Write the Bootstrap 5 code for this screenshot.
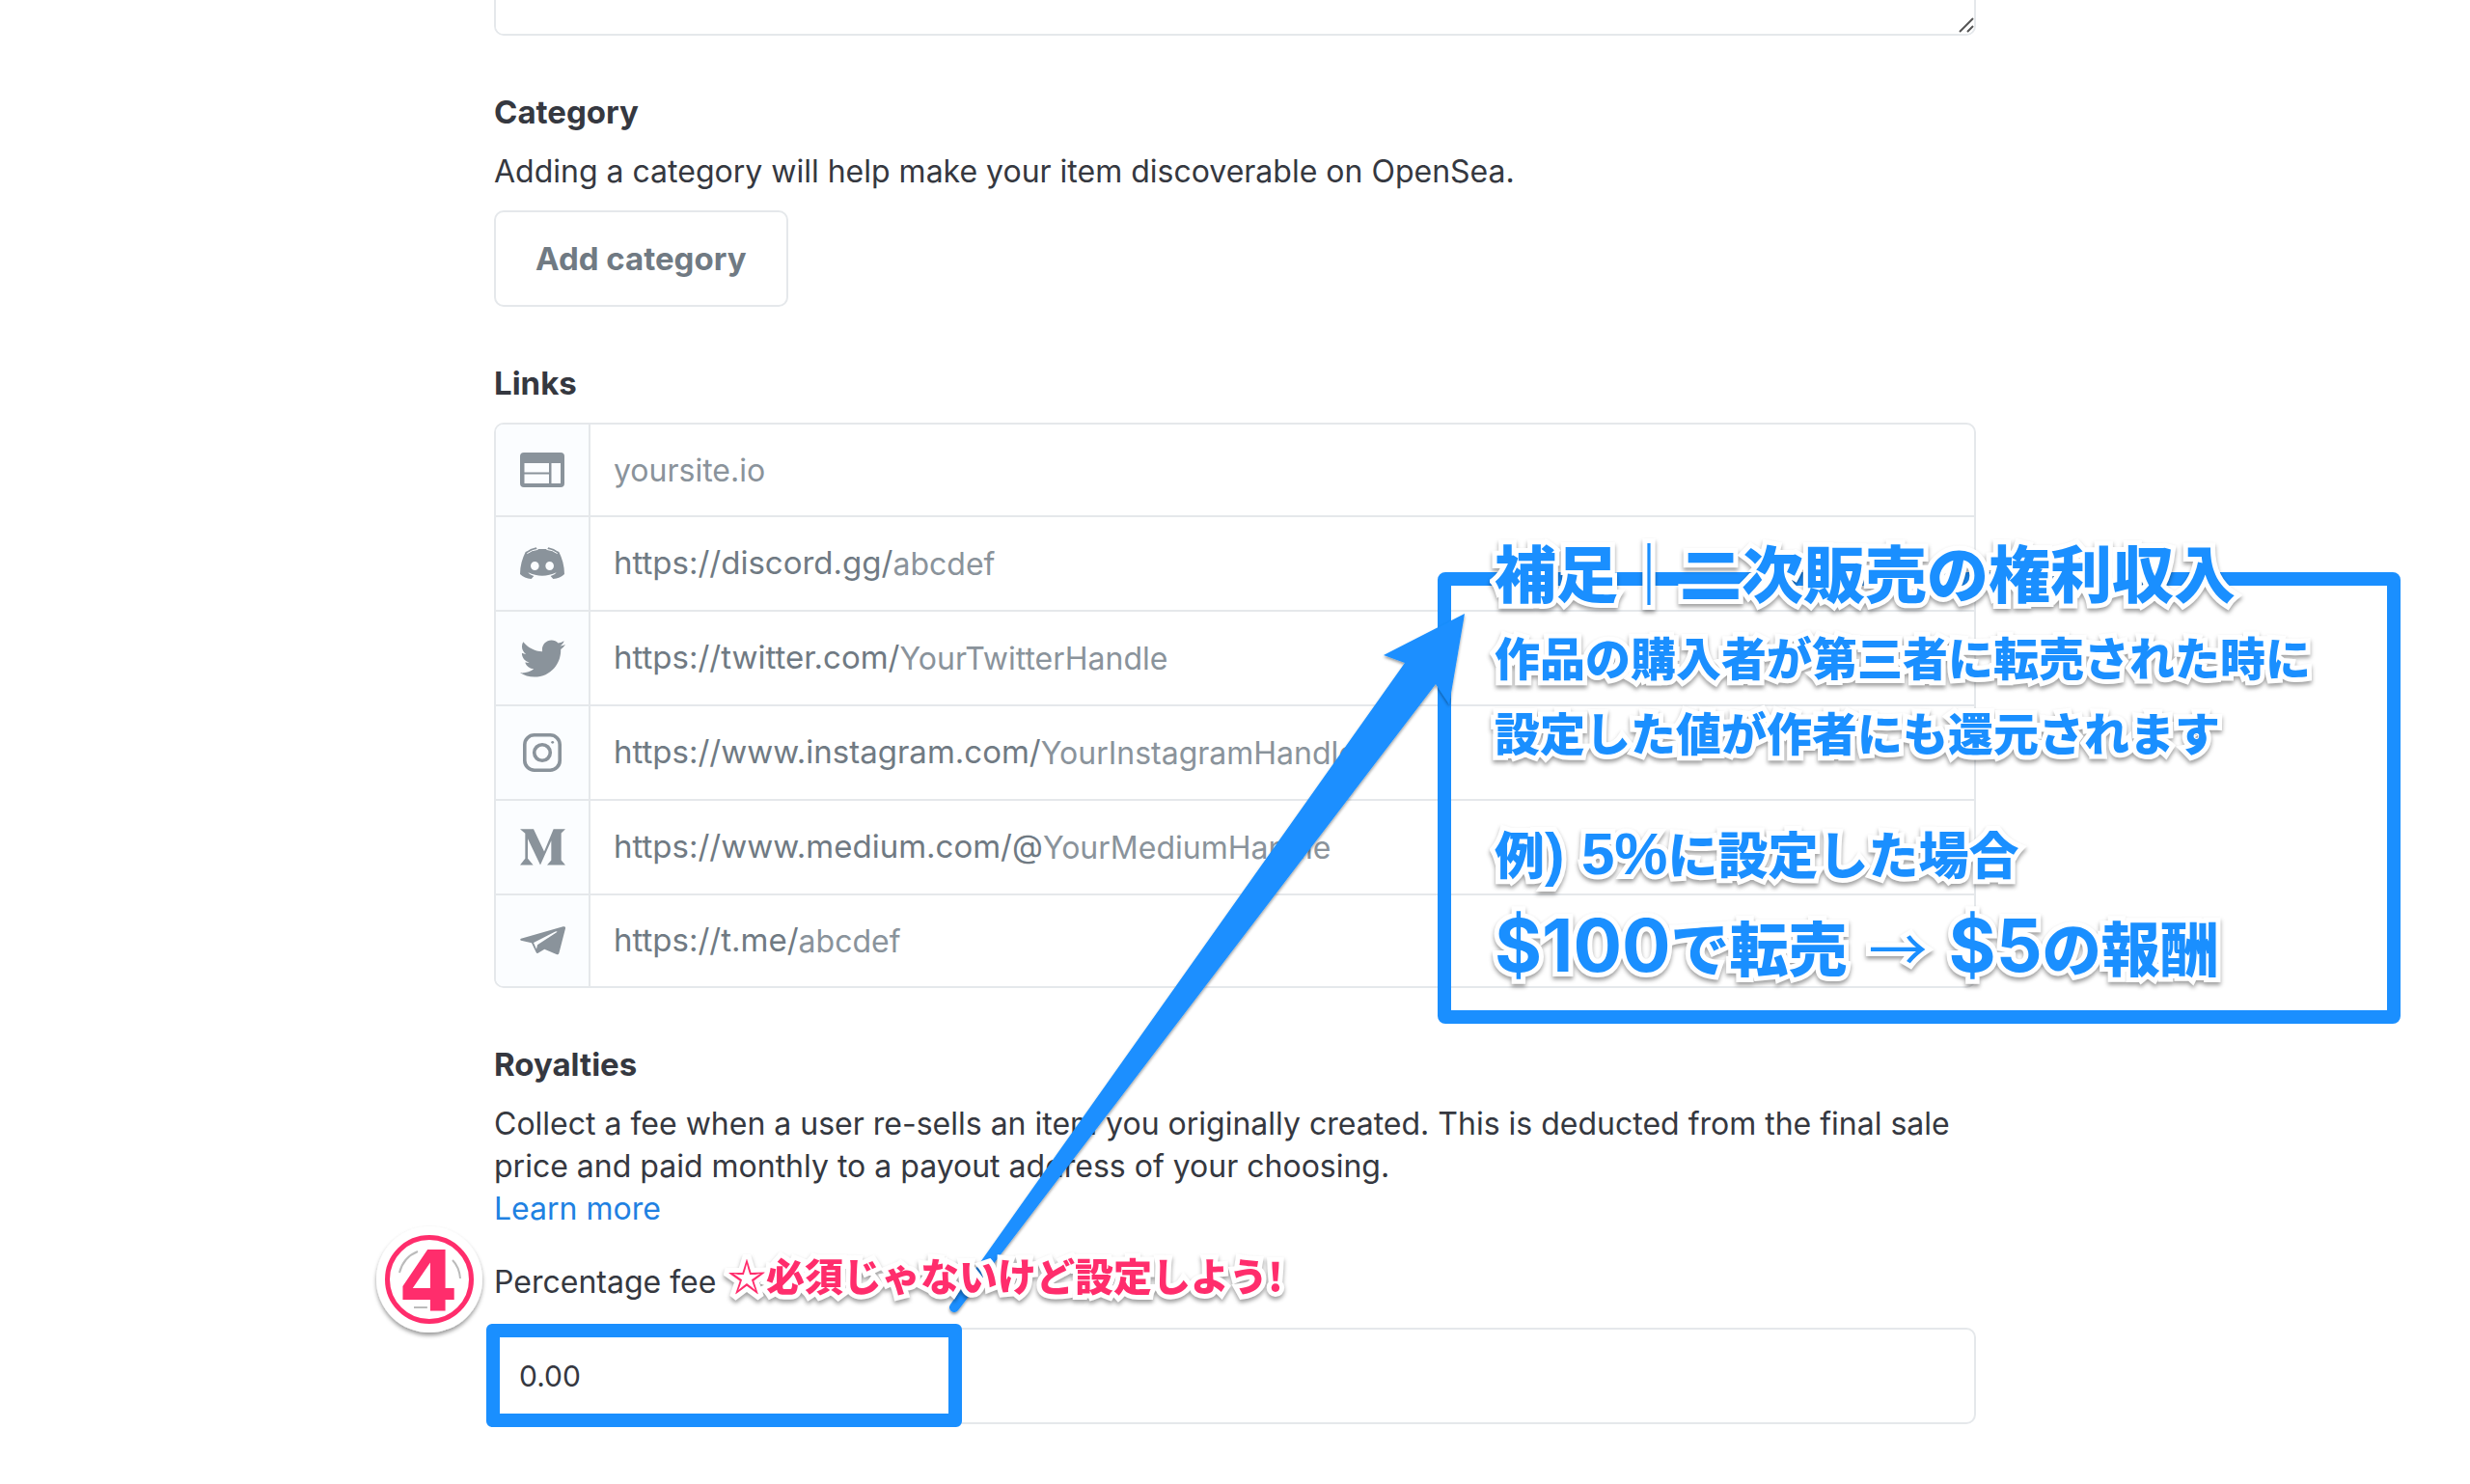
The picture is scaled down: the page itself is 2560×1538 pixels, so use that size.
<!DOCTYPE html>
<html lang="en">
<head>
<meta charset="utf-8">
<meta name="viewport" content="width=device-width, initial-scale=1">
<title>Create item</title>
<link href="https://cdn.jsdelivr.net/npm/bootstrap@5.3.0/dist/css/bootstrap.min.css" rel="stylesheet">
<script src="https://cdn.jsdelivr.net/npm/bootstrap@5.3.0/dist/js/bootstrap.bundle.min.js" defer></script>
<style>
  :root { --ink: #353840; --line: #e5e8eb; --muted: #707a83; --soft: #8a939b; --note: #1a8fff; --pink: #ff2d6c; }
  body { font-family: Inter, "Noto Sans CJK JP", sans-serif; font-size: 32px; line-height: 44px; color: var(--ink); background: #fff; overflow-x: hidden; }
  .item-form { max-width: 1536px; padding-bottom: 60px; }
  .desc-box { height: 37px; resize: none; border: 2px solid var(--line); border-top: 0; border-radius: 0 0 10px 10px; padding: 0 24px; }
  .grip { right: 2px; bottom: 3px; }
  .form-part { padding-top: 57px; }
  .part-title { font-size: 33px; line-height: 44px; font-weight: 700; margin: 0 0 18px; }
  .btn-add { --bs-btn-color: var(--muted); --bs-btn-border-color: var(--line); --bs-btn-bg: #fff; --bs-btn-hover-color: var(--ink); --bs-btn-hover-border-color: var(--soft);
    --bs-btn-border-width: 2px; --bs-btn-border-radius: 10px; --bs-btn-padding-x: 41px; --bs-btn-padding-y: 26px; --bs-btn-font-size: 33px; --bs-btn-font-weight: 700; --bs-btn-line-height: 44px; margin-top: 18px; }
  .link-list { border: 2px solid var(--line); border-radius: 10px; overflow: hidden; margin-top: 19px; }
  .link-row + .link-row { border-top: 2px solid var(--line); }
  .link-row { height: 98px; color: var(--muted); }
  .link-row:first-child { height: 94px; }
  .link-row:last-child { height: 96px; }
  .link-row span { font-size: 33px; padding-bottom: 2px; }
  .icon-cell { width: 98px; background: #fbfdff; border-right: 2px solid var(--line); color: var(--soft); }
  .bare-input { border: 0; padding: 2px 0 0; background: transparent; color: var(--ink); outline: 0; min-width: 0; }
  .bare-input::placeholder { color: var(--soft); opacity: 1; }
  .more-link { color: #2081e2; text-decoration: none; }
  .fee-input { height: 100px; border: 2px solid var(--line); border-radius: 10px; padding: 0 24px; font-size: 30px; color: var(--ink); }
  .fee-head { padding: 32px 0 25px; }
  .fee-frame { left: -8px; top: -4px; width: 493px; height: 107px; border: 14px solid var(--note); border-radius: 6px; pointer-events: none; }
  .outlined { -webkit-text-stroke: 10px #fff; paint-order: stroke fill; filter: drop-shadow(0 3px 2px rgba(0,0,0,.38)); font-family: "Noto Sans CJK JP", sans-serif; font-weight: 900; white-space: nowrap; }
  .fee-tip { left: 242px; top: 22px; color: var(--pink); font-size: 40px; line-height: 48px; z-index: 2; }
  .step-badge { left: -127px; top: -9px; overflow: visible; }
  .step-badge text { font-family: "DejaVu Sans", sans-serif; font-weight: 700; font-size: 88px; }
  .note-layer { left: 0; top: 0; overflow: visible; pointer-events: none; }
  .note-box { left: 978px; top: 593px; width: 998px; height: 468px; border: 14px solid var(--note); border-radius: 8px; }
  .note-text { left: 1037px; top: 543px; color: var(--note); }
  .note-text p { margin: 0; }
  .t-head { font-size: 64px; line-height: 96px; padding-bottom: 2px; }
  .t-body { font-size: 47px; line-height: 78px; }
  .t-case { font-size: 52px; line-height: 78px; padding-top: 48px; }
  .t-sum { font-size: 61px; line-height: 96px; padding-top: 10px; }
  .t-case .latin { font-family: "Liberation Sans", sans-serif; font-weight: 700; font-size: 62px; line-height: 1; }
  .t-sum .latin { font-family: Inter, sans-serif; font-weight: 700; font-size: 75px; line-height: 1; }
  .thin { font-weight: 400; }
</style>
</head>
<body>
<main class="item-form mx-auto position-relative">
  <form>
    <div class="position-relative">
      <textarea class="desc-box w-100 d-block" aria-label="Description"></textarea>
      <svg class="grip position-absolute" width="16" height="16" viewBox="0 0 16 16" stroke="#555" stroke-width="2" fill="none" aria-hidden="true"><path d="M1 15 15 1M9 15l6-6"/></svg>
    </div>

    <section class="form-part">
      <h2 class="part-title">Category</h2>
      <p class="mb-0">Adding a category will help make your item discoverable on OpenSea.</p>
      <button type="button" class="btn btn-add">Add category</button>
    </section>

    <section class="form-part">
      <h2 class="part-title mb-0">Links</h2>
      <div class="link-list">
        <div class="link-row d-flex">
          <label for="site" class="icon-cell d-flex flex-shrink-0 align-items-center justify-content-center" aria-label="Website">
            <svg width="48" height="48" viewBox="0 0 48 48" fill="currentColor"><path fill-rule="evenodd" d="M5 6h38a4 4 0 0 1 4 4v28a4 4 0 0 1-4 4H5a4 4 0 0 1-4-4V10a4 4 0 0 1 4-4zM5.500 17v9.500H31V17zM5.500 28.500V38H31v-9.500zM33.500 17v21H43V17z"/></svg>
          </label>
          <div class="d-flex flex-grow-1 align-items-center px-4"><input id="site" class="bare-input flex-grow-1" placeholder="yoursite.io"></div>
        </div>
        <div class="link-row d-flex">
          <label for="discord" class="icon-cell d-flex flex-shrink-0 align-items-center justify-content-center" aria-label="Discord">
            <svg width="46" height="34" viewBox="0 0 138 100" fill="currentColor"><path fill-rule="evenodd" d="M17 14C33 6 50 5 69 5s36 1 52 9c10 20 17 44 17 69-9 9-21 14-35 15l-8-9c8-2 14-6 18-11-29 14-59 14-88 0 4 5 10 9 18 11l-8 9C21 97 9 92 0 83 0 58 7 34 17 14zM46 44a13 13.500 0 1 0 0 27 13 13.500 0 0 0 0-27zm46 0a13 13.500 0 1 0 0 27 13 13.500 0 0 0 0-27z"/><path d="M18 15Q32 3 50 0l3 4M120 15Q106 3 88 0l-3 4"/><path d="M22 19Q36 8 56 6M116 19Q102 8 82 6" fill="none" stroke="#fbfdff" stroke-width="3"/></svg>
          </label>
          <div class="d-flex flex-grow-1 align-items-center px-4"><span>https://discord.gg/</span><input id="discord" class="bare-input flex-grow-1" placeholder="abcdef"></div>
        </div>
        <div class="link-row d-flex">
          <label for="twitter" class="icon-cell d-flex flex-shrink-0 align-items-center justify-content-center" aria-label="Twitter">
            <svg width="47" height="47" viewBox="0 0 512 512" fill="currentColor"><path d="M459.370 151.716c.325 4.548.325 9.097.325 13.645 0 138.720-105.583 298.558-298.558 298.558-59.452 0-114.680-17.219-161.137-47.106 8.447.974 16.568 1.299 25.340 1.299 49.055 0 94.213-16.568 130.274-44.832-46.132-.975-84.792-31.188-98.112-72.772 6.498.974 12.995 1.624 19.818 1.624 9.421 0 18.843-1.300 27.614-3.573-48.081-9.747-84.143-51.980-84.143-102.985v-1.299c13.969 7.797 30.214 12.670 47.431 13.319-28.264-18.843-46.781-51.005-46.781-87.391 0-19.492 5.197-37.360 14.294-52.954 51.655 63.675 129.300 105.258 216.365 109.807-1.624-7.797-2.599-15.918-2.599-24.040 0-57.828 46.782-104.934 104.934-104.934 30.213 0 57.502 12.670 76.670 33.137 23.715-4.548 46.456-13.320 66.599-25.340-7.798 24.366-24.366 44.833-46.132 57.827 21.117-2.273 41.584-8.122 60.426-16.243-14.292 20.791-32.161 39.308-52.628 54.253z"/></svg>
          </label>
          <div class="d-flex flex-grow-1 align-items-center px-4"><span>https://twitter.com/</span><input id="twitter" class="bare-input flex-grow-1" placeholder="YourTwitterHandle"></div>
        </div>
        <div class="link-row d-flex">
          <label for="instagram" class="icon-cell d-flex flex-shrink-0 align-items-center justify-content-center" aria-label="Instagram">
            <svg width="40" height="40" viewBox="0 0 40 40" fill="none" stroke="currentColor" stroke-width="3.600"><rect x="1.800" y="1.800" width="36.400" height="36.400" rx="10"/><circle cx="20" cy="20" r="8.300"/><circle cx="30.700" cy="9.300" r="1.400" fill="currentColor" stroke="none"/></svg>
          </label>
          <div class="d-flex flex-grow-1 align-items-center px-4"><span>https://www.instagram.com/</span><input id="instagram" class="bare-input flex-grow-1" placeholder="YourInstagramHandle"></div>
        </div>
        <div class="link-row d-flex">
          <label for="medium" class="icon-cell d-flex flex-shrink-0 align-items-center justify-content-center" aria-label="Medium">
            <svg width="47" height="38" viewBox="0 0 141 113" fill="currentColor"><path d="M0 0h42l33 70L104 0h37l-13 13v84l13 15H84l13-15V36l-34 76L24 30v62l17 20H0l16-20V14z"/></svg>
          </label>
          <div class="d-flex flex-grow-1 align-items-center px-4"><span>https://www.medium.com/@</span><input id="medium" class="bare-input flex-grow-1" placeholder="YourMediumHandle"></div>
        </div>
        <div class="link-row d-flex">
          <label for="telegram" class="icon-cell d-flex flex-shrink-0 align-items-center justify-content-center" aria-label="Telegram">
            <svg width="47" height="30" viewBox="0 0 141 90" fill="currentColor"><path fill-rule="evenodd" d="M3 38 134 1q8-2 7 6l-20 77q-2 6-8 3L76 71 56 83q-4 2-6-2L36 52 3 44q-5-3 0-6zM42 51l9 20 3-13 62-41q-4-2-8 0z"/></svg>
          </label>
          <div class="d-flex flex-grow-1 align-items-center px-4"><span>https://t.me/</span><input id="telegram" class="bare-input flex-grow-1" placeholder="abcdef"></div>
        </div>
      </div>
    </section>

    <section class="form-part">
      <h2 class="part-title">Royalties</h2>
      <p class="mb-0">Collect a fee when a user re-sells an item you originally created. This is deducted from the final sale price and paid monthly to a payout address of your choosing.</p>
      <a href="#" class="more-link d-inline-block align-top">Learn more</a>
      <div class="fee-head position-relative">
        <label for="fee" class="d-block">Percentage fee</label>
        <svg class="step-badge position-absolute" width="120" height="120" viewBox="0 0 120 120">
          <defs><filter id="lift" x="-10%" y="-10%" width="120%" height="125%"><feDropShadow dx="0" dy="3" stdDeviation="2" flood-opacity=".4"/></filter></defs>
          <circle cx="60" cy="60" r="55" fill="#fff" filter="url(#lift)"/>
          <circle cx="60" cy="60" r="43.500" fill="#fff" stroke="#ff2d6c" stroke-width="5"/>
          <path d="M29 53Q33 37 48 31M92 59Q91 47 84 40M44 89h14" fill="none" stroke="#bbb" stroke-width="2"/>
          <text x="59" y="93" text-anchor="middle" fill="#ff2d6c" stroke="#fff" stroke-width="6" paint-order="stroke">4</text>
        </svg>
        <div class="fee-tip outlined position-absolute">☆必須じゃないけど設定しよう!</div>
      </div>
      <div class="position-relative">
        <input id="fee" class="fee-input w-100 d-block" value="0.00">
        <div class="fee-frame position-absolute"></div>
      </div>
    </section>
  </form>

  <!-- annotations drawn over the form -->
  <div class="note-box position-absolute"></div>
  <svg class="note-layer position-absolute" width="1536" height="1480" viewBox="0 0 1536 1480" aria-hidden="true">
    <defs><filter id="soft" x="-5%" y="-5%" width="110%" height="110%"><feDropShadow dx="0" dy="2" stdDeviation="1.500" flood-opacity=".4"/></filter></defs>
    <path filter="url(#soft)" fill="#1a8fff" d="M1006 636 922 679l22 8L473 1352a4.500 4.500 0 0 0 8 6L976 709l14 21z"/>
  </svg>
  <div class="note-text outlined position-absolute">
    <p class="t-head">補足｜二次販売の権利収入</p>
    <p class="t-body">作品の購入者が第三者に転売された時に</p>
    <p class="t-body">設定した値が作者にも還元されます</p>
    <p class="t-case">例<span class="latin">) 5%</span>に設定した場合</p>
    <p class="t-sum"><span class="latin">$100</span>で転売 <span class="thin mx-2">→</span> <span class="latin">$5</span>の報酬</p>
  </div>
</main>
</body>
</html>
